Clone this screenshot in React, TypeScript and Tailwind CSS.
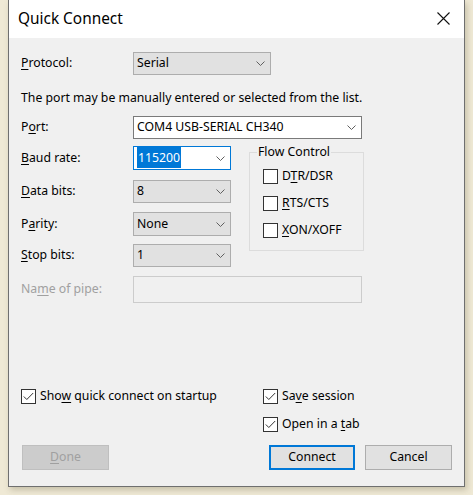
import React from 'react';

const FONT = { fontFamily: '"Noto Sans", "Open Sans", sans-serif' };

function Chevron() {
  return (
    <svg width="9" height="5" viewBox="0 0 9 5" className="shrink-0">
      <path d="M0.5 0.5 L4.5 4.5 L8.5 0.5" fill="none" stroke="#606060" strokeWidth="1" />
    </svg>
  );
}

// Access-key label: one letter underlined, like a Win32 dialog
function Key({ pre = '', k, post = '' }: { pre?: string; k: string; post?: string }) {
  return (
    <>
      {pre}
      <span className="underline underline-offset-[2px]">{k}</span>
      {post}
    </>
  );
}

type ComboKind = 'list' | 'edit' | 'focus';

function Combo({ width, height, kind, children }: { width: string; height: string; kind: ComboKind; children: React.ReactNode }) {
  const look =
    kind === 'list'
      ? 'bg-[#e1e1e1] border-[#adadad]'
      : kind === 'focus'
        ? 'bg-white border-[#0078d7]'
        : 'bg-white border-[#7a7a7a]';
  return (
    <div className={`${width} ${height} ${look} border flex items-center justify-between pl-[3px] pr-[5px]`}>
      <span className="leading-none">{children}</span>
      <Chevron />
    </div>
  );
}

function Check({ checked, children }: { checked?: boolean; children: React.ReactNode }) {
  return (
    <div className="flex items-center h-[15px] gap-[4px]">
      <div className="w-[15px] h-[15px] border border-[#333333] bg-white flex items-center justify-center shrink-0">
        {checked && (
          <svg width="11" height="9" viewBox="0 0 11 9">
            <path d="M0.8 4.5 L3.8 7.5 L10.2 1" fill="none" stroke="#333333" strokeWidth="1" />
          </svg>
        )}
      </div>
      <span>{children}</span>
    </div>
  );
}

function Row({ label, disabled, children, className = '' }: { label: React.ReactNode; disabled?: boolean; children: React.ReactNode; className?: string }) {
  return (
    <div className={`flex items-center ${className}`}>
      <div className={`w-[112px] ${disabled ? 'text-[#a0a0a0]' : ''}`}>{label}</div>
      {children}
    </div>
  );
}

export default function App() {
  return (
    <div className="w-[473px] h-[495px] bg-[#efe9d5] pl-[8px] overflow-hidden" style={FONT}>
      <div className="w-[457px] h-[487px] border border-t-0 border-[#6f6f6f] bg-[#f0f0f0] flex flex-col text-[12.25px] text-black shadow-[2px_3px_6px_rgba(80,70,40,0.25)]">
        {/* title bar */}
        <div className="h-[38px] bg-white flex items-center justify-between pl-[9px] pr-[14px] shrink-0">
          <span className="text-[15.4px] leading-none pb-[1px]">Quick Connect</span>
          <svg width="13" height="13" viewBox="0 0 13 13" className="mb-[1px]">
            <path d="M0.5 0.5 L12.5 12.5 M12.5 0.5 L0.5 12.5" stroke="#111" strokeWidth="1.1" />
          </svg>
        </div>

        <div className="flex-1 flex flex-col pl-[12px] pb-[16px]">
          <Row label={<Key k="P" post="rotocol:" />} className="mt-[14px]">
            <Combo width="w-[138px]" height="h-[23px]" kind="list">Serial</Combo>
          </Row>

          <p className="mt-[15px] leading-[16px] h-[16px]">The port may be manually entered or selected from the list.</p>

          <Row label={<Key pre="P" k="o" post="rt:" />} className="mt-[10px]">
            <Combo width="w-[229px]" height="h-[23px]" kind="edit">COM4 USB-SERIAL CH340</Combo>
          </Row>

          <div className="flex mt-[7px]">
            <div className="flex flex-col">
              <Row label={<Key k="B" post="aud rate:" />}>
                <Combo width="w-[98px]" height="h-[24px]" kind="focus">
                  <span className="bg-[#0078d7] text-white px-[1px] py-[2px]">115200</span>
                </Combo>
              </Row>
              <Row label={<Key k="D" post="ata bits:" />} className="mt-[10px]">
                <Combo width="w-[98px]" height="h-[23px]" kind="list">8</Combo>
              </Row>
              <Row label={<Key pre="P" k="a" post="rity:" />} className="mt-[9px]">
                <Combo width="w-[98px]" height="h-[24px]" kind="list">None</Combo>
              </Row>
              <Row label={<Key k="S" post="top bits:" />} className="mt-[8px]">
                <Combo width="w-[98px]" height="h-[23px]" kind="list">1</Combo>
              </Row>
            </div>

            <fieldset className="ml-[18px] mt-[-2px] w-[115px] h-[107px] border border-[#dcdcdc]">
              <legend className="ml-[7px] px-[1px] leading-[16px]">Flow Control</legend>
              <div className="flex flex-col pl-[13px] mt-[9px] gap-[12px]">
                <Check><Key pre="D" k="T" post="R/DSR" /></Check>
                <Check><Key k="R" post="TS/CTS" /></Check>
                <Check><Key k="X" post="ON/XOFF" /></Check>
              </div>
            </fieldset>
          </div>

          <Row label={<Key pre="Na" k="m" post="e of pipe:" />} disabled className="mt-[9px]">
            <div className="w-[229px] h-[27px] border border-[#cccccc]" />
          </Row>

          <div className="flex-1" />

          <div className="flex">
            <div className="w-[242px]">
              <Check checked><Key pre="Sho" k="w" post=" quick connect on startup" /></Check>
            </div>
            <Check checked><Key pre="Sa" k="v" post="e session" /></Check>
          </div>
          <div className="flex mt-[13px] pl-[242px]">
            <Check checked><Key pre="Open in a " k="t" post="ab" /></Check>
          </div>

          <div className="flex mt-[13px] h-[25px]">
            <button className="ml-[1px] w-[87px] h-[25px] bg-[#cccccc] border border-[#bfbfbf] text-[#a0a0a0]">
              <Key k="D" post="one" />
            </button>
            <button className="ml-[160px] w-[86px] h-[25px] bg-[#e1e1e1] border-2 border-[#0078d7]">Connect</button>
            <button className="ml-[10px] w-[87px] h-[25px] bg-[#e1e1e1] border border-[#adadad]">Cancel</button>
          </div>
        </div>
      </div>
    </div>
  );
}
